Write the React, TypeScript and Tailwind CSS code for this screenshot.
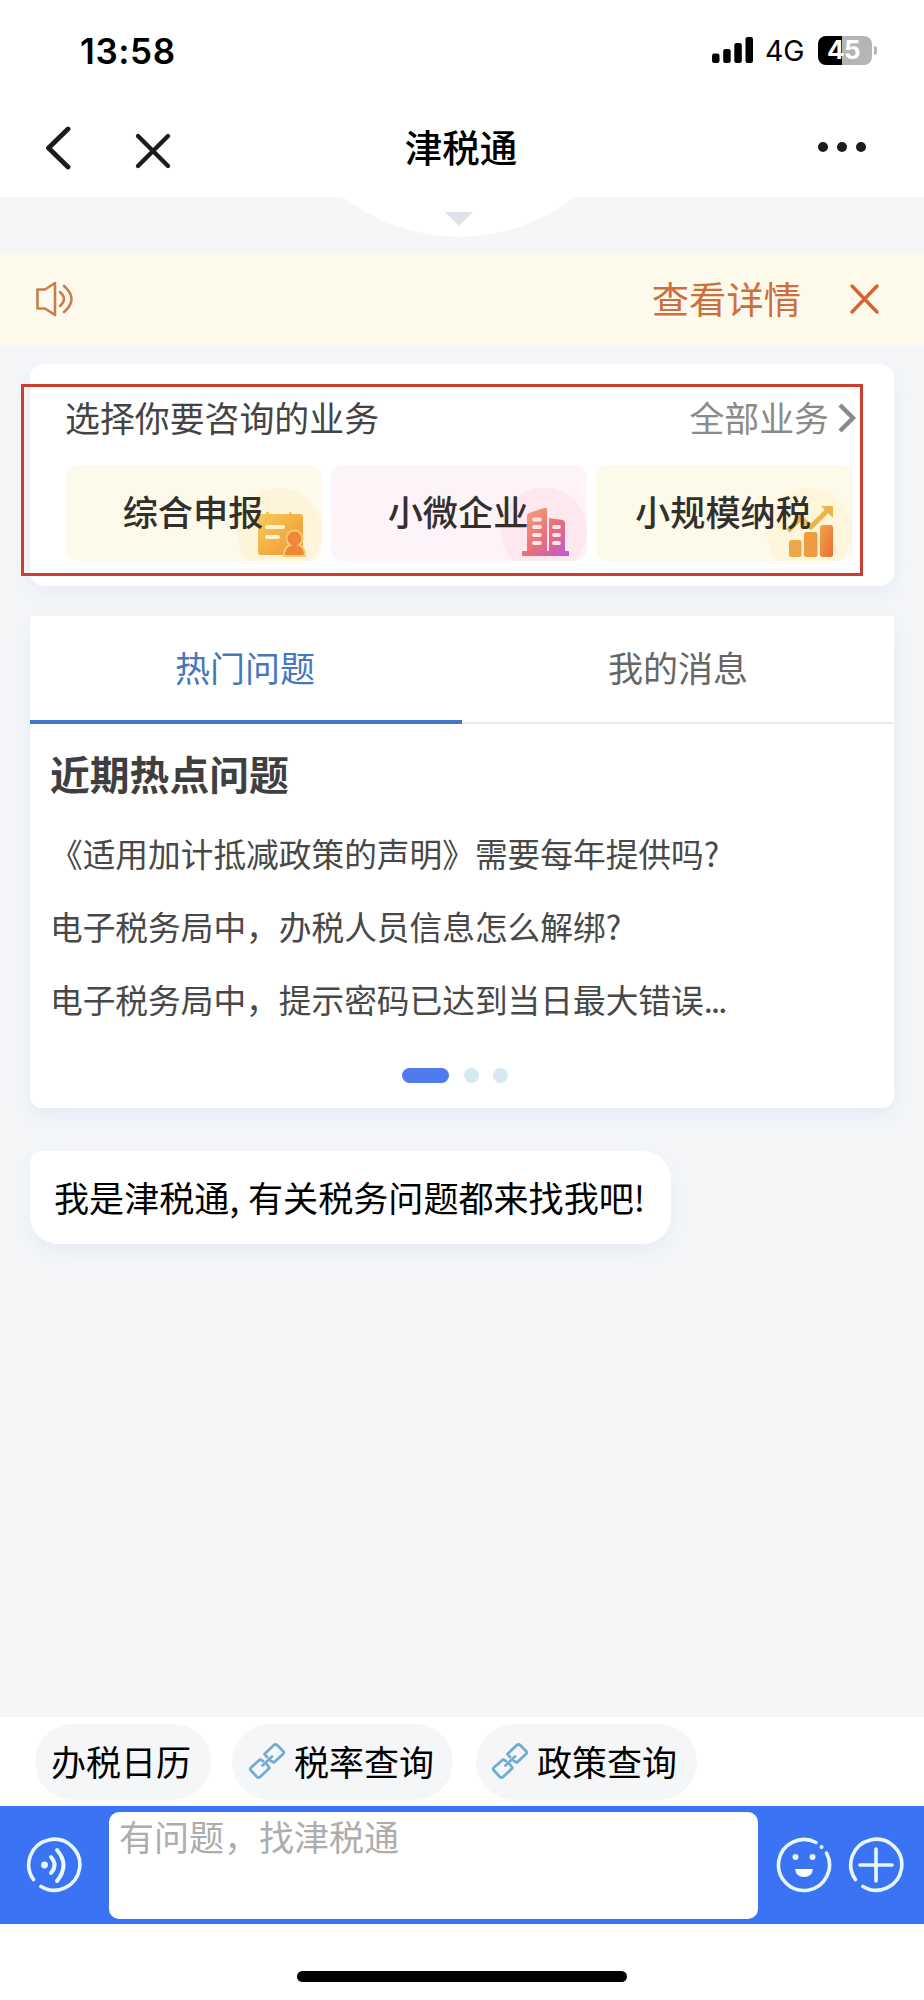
import type { ReactNode } from 'react'

const questions = [
  { text: '《适用加计抵减政策的声明》需要每年提供吗?' },
  { text: '电子税务局中，办税人员信息怎么解绑?' },
  { text: '电子税务局中，提示密码已达到当日最大错误', cut: true },
]

function StatusBar() {
  return (
    <div className="flex h-[100px] items-center pl-[80px] pr-[47px]">
      <span className="mt-[2px] font-[Inter] text-[35px] leading-none font-semibold tracking-[0.6px]">13:58</span>
      <svg className="ml-auto" width="42" height="26" viewBox="0 0 42 26">
        <rect x="0" y="16.5" width="7.5" height="9.5" rx="2.2" />
        <rect x="11.2" y="12" width="7.5" height="14" rx="2.2" />
        <rect x="22.3" y="6" width="7.5" height="20" rx="2.2" />
        <rect x="33.5" y="0" width="7.5" height="26" rx="2.2" />
      </svg>
      <span className="mt-[3px] ml-[11px] w-[41px] font-[Inter] text-[28.5px] leading-none tracking-[-0.2px] whitespace-nowrap">4G</span>
      <div className="ml-[12px] flex items-center gap-[2px]">
        <div className="flex h-[29px] w-[54px] items-center justify-center rounded-[8px] bg-linear-to-r from-black from-45% to-[#b5b5b5] to-45%">
          <span className="mr-[3px] font-[Inter] text-[26px] leading-none font-bold tracking-[-0.5px] text-white">45</span>
        </div>
        <div className="h-[9px] w-[3px] rounded-r-full bg-[#b5b5b5]" />
      </div>
    </div>
  )
}

function NavBar() {
  return (
    <div className="flex h-[97px] items-center justify-between pl-[44px] pr-[58px]">
      <div className="flex w-[132px] items-center gap-[62px]">
        <svg className="-mt-[2px]" width="28" height="44" viewBox="0 0 28 44" fill="none" stroke="#1c1c1c" strokeWidth="4.8" strokeLinecap="round" strokeLinejoin="round">
          <path d="M24 3 L4.5 22 L24 41" />
        </svg>
        <svg className="mt-[5px]" width="38" height="38" viewBox="0 0 38 38" fill="none" stroke="#1c1c1c" strokeWidth="4.4" strokeLinecap="round">
          <path d="M4 4 L34 34 M34 4 L4 34" />
        </svg>
      </div>
      <h1 className="-mt-[6px] ml-[-2px] text-[37.5px] leading-none font-medium">津税通</h1>
      <div className="-mt-[3px] flex w-[118px] justify-end gap-[9px]">
        <i className="size-[10px] rounded-full bg-[#1c1c1c]" />
        <i className="size-[10px] rounded-full bg-[#1c1c1c]" />
        <i className="size-[10px] rounded-full bg-[#1c1c1c]" />
      </div>
    </div>
  )
}

function Notice() {
  return (
    <div className="flex h-[92px] items-center bg-[#fdf9eb] pb-[3px] pl-[34px] pr-[43px] text-[#cd6e3e]">
      <svg width="40" height="38" viewBox="0 0 40 38" fill="none" stroke="#c67d50" strokeWidth="2.6" strokeLinejoin="round" strokeLinecap="round">
        <path d="M3.500 9.500 H11 L21 3 V35 L11 28.500 H3.500 Z" />
        <path d="M26 12 Q34 19 26 26" />
        <path d="M30 6 Q45 19 30 32" />
      </svg>
      <span className="ml-auto text-[37.3px] leading-none">查看详情</span>
      <svg className="ml-[48px]" width="32" height="32" viewBox="0 0 32 32" fill="none" stroke="#d5622f" strokeWidth="3.4" strokeLinecap="round">
        <path d="M3 3 L28 29 M28 3 L3 29" />
      </svg>
    </div>
  )
}

function FormIcon() {
  return (
    <svg width="50" height="48" viewBox="0 0 50 48">
      <defs>
        <linearGradient id="form" x1="0" y1="0" x2="1" y2="1">
          <stop offset="0" stopColor="#f7cb5c" />
          <stop offset="1" stopColor="#f0962f" />
        </linearGradient>
      </defs>
      <path d="M4 4 H10 V2 H13 V4 H33 L34 1 L36 4 H44 Q47 4 47 7 V42 Q47 45 44 45 H5 Q2 45 2 42 V7 Q2 4 4 4Z" fill="url(#form)" />
      <path d="M11 17 H27 M11 27 H22" stroke="#fff3cf" strokeWidth="4" strokeLinecap="round" />
      <path d="M28 46 Q28 37 34 35 A8 8 0 1 1 43 35 Q49 37 49 46Z" fill="#ec8836" stroke="#f9c877" strokeWidth="2" />
    </svg>
  )
}

function BuildingIcon() {
  return (
    <svg width="50" height="52" viewBox="0 0 50 52">
      <defs>
        <linearGradient id="building" x1="0" y1="0" x2="1" y2="1">
          <stop offset="0" stopColor="#f2a873" />
          <stop offset="0.55" stopColor="#ea6d7c" />
          <stop offset="1" stopColor="#b95bd2" />
        </linearGradient>
      </defs>
      <path d="M6 45 V10 Q6 8 8 7 L23 2 Q26 1 26 4 V45 H28 V12 L42 14 Q44 15 44 17 V45 H47 Q48 45 48 46 V50 H1 V46 Q1 45 2 45Z" fill="url(#building)" />
      <path d="M13 13.500 H19 M13 21 H19 M13 29 H19 M13 37 H19 M33 21 H38 M33 29 H38 M33 37 H38" stroke="#ffe6e2" strokeWidth="3.8" strokeLinecap="round" />
    </svg>
  )
}

function ChartIcon() {
  return (
    <svg width="50" height="54" viewBox="0 0 50 54">
      <defs>
        <linearGradient id="chart" x1="0" y1="0" x2="1" y2="1">
          <stop offset="0" stopColor="#f0a548" />
          <stop offset="1" stopColor="#ec6c33" />
        </linearGradient>
      </defs>
      <path d="M2 27 L14 14 L25 23 L42 6" fill="none" stroke="#ebb54c" strokeWidth="5" />
      <path d="M35 2 H47 V14Z" fill="#ebb54c" />
      <rect x="3" y="36" width="12.500" height="17" rx="2.500" fill="#eda748" />
      <rect x="18" y="28" width="13.500" height="25" rx="2.500" fill="#ef9c41" />
      <rect x="34" y="21" width="13" height="32" rx="2.500" fill="url(#chart)" />
    </svg>
  )
}

function BusinessTile({ label, tile, blob, children }: { label: string; tile: string; blob: string; children: ReactNode }) {
  return (
    <div className={`relative flex h-[96px] w-[256px] items-center justify-center overflow-hidden rounded-[12px] ${tile}`}>
      <div className={`absolute right-0 -bottom-[13px] size-[86px] rounded-full ${blob}`} />
      <div className="absolute right-[16px] bottom-[3px]">{children}</div>
      <span className="relative -mt-[5px] mr-[2px] text-[35.2px] leading-none font-medium text-[#33302c]">{label}</span>
    </div>
  )
}

function BusinessCard() {
  return (
    <section className="relative mx-[30px] mt-[18px] h-[222px] rounded-[14px] bg-white pt-[35px] pl-[35px] shadow-[0_8px_20px_rgba(90,120,220,0.08)]">
      <div className="flex items-center justify-between pr-[37px] text-[34.9px] leading-[36px]">
        <span className="text-[#444]">选择你要咨询的业务</span>
        <span className="flex items-center gap-[8px] text-[#8a8a8a]">
          全部业务
          <svg className="mt-[2px]" width="20" height="30" viewBox="0 0 20 30" fill="none" stroke="#8a8a8a" strokeWidth="4.4">
            <path d="M3 2 L16 15 L3 28" />
          </svg>
        </span>
      </div>
      <div className="mt-[30px] ml-[1px] flex gap-[9px]">
        <BusinessTile label="综合申报" tile="bg-[#fefaeb]" blob="bg-[#fdf4d9]"><FormIcon /></BusinessTile>
        <BusinessTile label="小微企业" tile="bg-[#fdf3f8]" blob="bg-[#fce8ee]"><BuildingIcon /></BusinessTile>
        <BusinessTile label="小规模纳税" tile="bg-[#fefaea]" blob="bg-[#fef5da]"><ChartIcon /></BusinessTile>
      </div>
      {/* highlight frame drawn over the card */}
      <div className="absolute top-[20px] -left-[9px] h-[192px] w-[842px] border-[3px] border-[#cb3d2c]" />
    </section>
  )
}

function HotQuestions() {
  return (
    <section className="mx-[30px] mt-[30px] h-[492px] rounded-b-[12px] bg-white shadow-[0_8px_20px_rgba(90,120,220,0.09)]">
      <div className="flex h-[108px] text-center text-[35px] leading-[101px]">
        <div className="w-[432px] border-b-[4px] border-[#4578c4] pr-[2px] text-[#4577bf]">热门问题</div>
        <div className="flex-1 border-b-2 border-[#e9eaec] text-[#666]">我的消息</div>
      </div>
      <h2 className="mt-[29px] pl-[20px] text-[39.8px] leading-[40px] font-bold text-[#3f3f3f]">近期热点问题</h2>
      <ul className="mt-[23px] pl-[20px] text-[32.7px] leading-[73px] text-[#484848]">
        {questions.map((q) => (
          <li key={q.text} className="whitespace-nowrap">
            {q.text}
            {q.cut && <span className="tracking-[-1.8px]">...</span>}
          </li>
        ))}
      </ul>
      <div className="mt-[33px] flex items-center pl-[372px]">
        <i className="h-[15px] w-[47px] rounded-full bg-[#4f7bee]" />
        <i className="ml-[15px] size-[15px] rounded-full bg-[#d6e8f2]" />
        <i className="ml-[14px] size-[15px] rounded-full bg-[#d6e8f2]" />
      </div>
    </section>
  )
}

function LinkIcon() {
  return (
    <svg width="38" height="38" viewBox="0 0 38 38" fill="none" stroke="#74acd0" strokeWidth="2.8" strokeLinejoin="round" strokeLinecap="round">
      <path d="M19 15 L16.500 12 L26 3 Q27.500 2 29 3 L35 9 Q36.500 10.500 35 12 L26 20.500 L23 19" />
      <path d="M19 22.500 L21.500 26 L12 35 Q10.500 36 9 35 L3 28.500 Q1.500 27 3 25.500 L12 17.500 L15 19" />
      <path d="M14.500 23.500 L24 14.500" />
    </svg>
  )
}

function Composer() {
  return (
    <div className="flex h-[118px] items-center bg-[#3a74f5] pl-[25px] pr-[19px]">
      <svg width="58" height="58" viewBox="0 0 58 58" fill="none" stroke="#e8f8ff" strokeWidth="3.6" strokeLinecap="round">
        <path d="M8.500 43.500 A25.500 25.500 0 1 1 16 50.500" />
        <circle cx="19.500" cy="29" r="3.400" fill="#e8f8ff" stroke="none" />
        <path d="M26 21 Q33 29 26 37" strokeWidth="4" />
        <path d="M32 14 Q45 29 32 45" strokeWidth="4" />
      </svg>
      <div className="ml-[26px] h-[107px] w-[649px] rounded-[10px] bg-white pt-[6px] pl-[10px] text-[35px] leading-[36px] text-[#adadad]">
        有问题，找津税通
      </div>
      <svg className="ml-auto" width="58" height="58" viewBox="0 0 58 58" fill="none" stroke="#e8f8ff" strokeWidth="3.6" strokeLinecap="round">
        <path d="M41 6.500 A25.500 25.500 0 1 0 51.500 17" />
        <circle cx="46.500" cy="11" r="2" fill="#e8f8ff" stroke="none" />
        <circle cx="20.500" cy="21" r="3" fill="#e8f8ff" stroke="none" />
        <circle cx="37.500" cy="21" r="3" fill="#e8f8ff" stroke="none" />
        <path d="M20 33 H38 Q37 41 29 41 Q21 41 20 33Z" fill="#fff" stroke="none" />
      </svg>
      <svg className="ml-[14px]" width="58" height="58" viewBox="0 0 58 58" fill="none" stroke="#e8f8ff" strokeWidth="3.6" strokeLinecap="round">
        <path d="M8.500 43.500 A25.500 25.500 0 1 1 16 50.500" />
        <path d="M29 13 V45 M13 29 H45" />
      </svg>
    </div>
  )
}

export default function App() {
  return (
    <div className="flex h-[2000px] w-[924px] flex-col overflow-hidden bg-[#f4f6f8] font-[Noto_Sans_CJK_SC,sans-serif] text-black">
      <header className="bg-white">
        <StatusBar />
        <NavBar />
      </header>
      <div className="flex h-[57px] justify-center pr-[6px]">
        <svg width="232" height="40" viewBox="0 0 232 40">
          <path d="M0 0 A189 189 0 0 0 232 0Z" fill="#fff" />
          <path d="M102 15 H130 L116 29Z" fill="#dbe2e9" />
        </svg>
      </div>
      <Notice />
      <BusinessCard />
      <HotQuestions />
      <div className="mt-[43px] ml-[30px] h-[93px] w-[641px] rounded-[28px] rounded-tl-[12px] bg-white pl-[24px] text-[35.1px] leading-[91px] whitespace-nowrap shadow-[0_8px_20px_rgba(90,120,220,0.08)]">
        我是津税通, <span className="ml-[1px]">有关税务问题都来找我吧!</span>
      </div>
      <footer className="mt-auto h-[283px] bg-white">
        <div className="flex h-[89px] items-center pl-[35px] text-[35px] leading-none">
          <div className="flex h-[76px] w-[176px] items-center rounded-full bg-[#f5f6f8] pb-[2px] pl-[16px]">办税日历</div>
          <div className="ml-[21px] flex h-[76px] w-[221px] items-center gap-[8px] rounded-full bg-[#f5f6f8] pb-[2px] pl-[16px]"><LinkIcon />税率查询</div>
          <div className="ml-[23px] flex h-[76px] w-[221px] items-center gap-[8px] rounded-full bg-[#f5f6f8] pb-[2px] pl-[15px]"><LinkIcon />政策查询</div>
        </div>
        <Composer />
        <div className="mx-auto mt-[47px] h-[11px] w-[330px] rounded-full bg-black" />
      </footer>
    </div>
  )
}
